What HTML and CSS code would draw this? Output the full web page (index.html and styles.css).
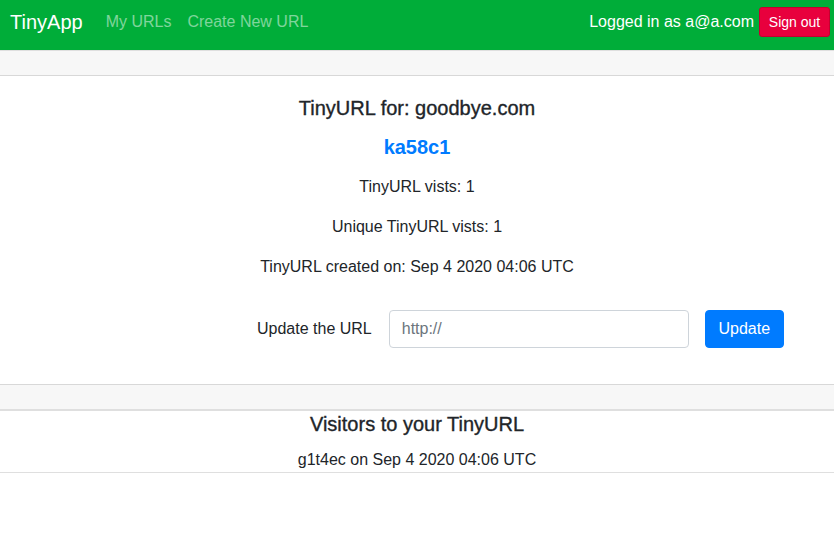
FILE: index.html
```html
<!DOCTYPE html>
<html lang="en">
<head>
<meta charset="utf-8">
<title>TinyApp</title>
<link rel="stylesheet" href="styles.css">
</head>
<body>
<nav class="navbar">
  <div class="nav-left">
    <a class="brand" href="#">TinyApp</a>
    <a class="nav-link" href="#">My URLs</a>
    <a class="nav-link" href="#">Create New URL</a>
  </div>
  <div class="nav-right">
    <span class="user">Logged in as a@a.com</span>
    <button class="btn-signout">Sign out</button>
  </div>
</nav>
<main>
  <section class="card">
    <div class="card-header"></div>
    <div class="card-body">
      <h5 class="card-title">TinyURL for: goodbye.com</h5>
      <h5 class="short"><a href="#">ka58c1</a></h5>
      <p class="stat">TinyURL vists: 1</p>
      <p class="stat">Unique TinyURL vists: 1</p>
      <p class="stat">TinyURL created on: Sep 4 2020 04:06 UTC</p>
      <form class="update-form">
        <label class="update-label" for="longURL">Update the URL</label>
        <input id="longURL" class="url-input" type="text" placeholder="http://">
        <button class="btn-update" type="button">Update</button>
      </form>
    </div>
    <div class="card-footer"></div>
  </section>
  <section class="visitors">
    <h5 class="visitors-title">Visitors to your TinyURL</h5>
    <p class="visit-row">g1t4ec on Sep 4 2020 04:06 UTC</p>
  </section>
</main>
</body>
</html>
```

FILE: styles.css
```css
* { box-sizing: border-box; }
html, body { margin: 0; padding: 0; }
body {
  font-family: "Liberation Sans", Arial, sans-serif;
  font-size: 16px;
  line-height: 1.5;
  color: #212529;
  background: #fff;
}
.navbar {
  height: 50px;
  background: #00ad39;
  display: flex;
  justify-content: space-between;
  align-items: flex-start;
  padding: 0 4px 0 10px;
}
.nav-left, .nav-right {
  display: flex;
  align-items: center;
  height: 43px;
}
.brand {
  color: #fff;
  font-size: 20px;
  text-decoration: none;
  margin-right: 15px;
}
.nav-link {
  color: rgba(255,255,255,0.5);
  text-decoration: none;
  padding: 0 8px;
}
.user { color: #fff; margin-right: 5px; }
.btn-signout {
  font-family: inherit;
  font-size: 14px;
  color: #fff;
  background: #e8003d;
  border: 1px solid #c5002f;
  border-radius: 3px;
  height: 30px;
  width: 71px;
  padding: 0;
}
.card {
  border-top: 1px solid rgba(0,0,0,0.125);
  border-bottom: 1px solid rgba(0,0,0,0.125);
}
.card-header {
  height: 25px;
  background: #f7f7f7;
  border-bottom: 1px solid rgba(0,0,0,0.125);
}
.card-footer {
  height: 25px;
  background: #f7f7f7;
  border-top: 1px solid rgba(0,0,0,0.125);
}
.card-body {
  padding: 20px;
  text-align: center;
}
.card-title {
  font-size: 20px;
  font-weight: 400;
  -webkit-text-stroke: 0.35px #212529;
  line-height: 24px;
  margin: 0 0 15px;
}
.short {
  font-size: 20px;
  font-weight: 700;
  line-height: 24px;
  margin: 0 0 16px;
}
.short a { color: #007bff; text-decoration: none; }
.stat {
  margin: 0 0 16px;
}
.update-form {
  display: flex;
  align-items: center;
  margin: 31px 0 16px;
  padding-left: 237px;
}
.update-label { margin-right: 17px; }
.url-input {
  width: 300px;
  height: 38px;
  border: 1px solid #ced4da;
  border-radius: 4px;
  padding: 6px 12px;
  font-family: inherit;
  font-size: 16px;
  color: #495057;
  margin-right: 16px;
}
.url-input::placeholder { color: #6c757d; }
.btn-update {
  width: 79px;
  height: 38px;
  background: #007bff;
  color: #fff;
  border: 1px solid #007bff;
  border-radius: 4px;
  font-family: inherit;
  font-size: 16px;
  padding: 0;
}
.visitors {
  text-align: center;
  border-top: 1px solid rgba(0,0,0,0.125);
}
.visitors-title {
  font-size: 20px;
  font-weight: 400;
  -webkit-text-stroke: 0.35px #212529;
  line-height: 24px;
  margin: 1px 0 12px;
}
.visit-row {
  margin: 0;
  border-bottom: 1px solid rgba(0,0,0,0.125);
}
```
